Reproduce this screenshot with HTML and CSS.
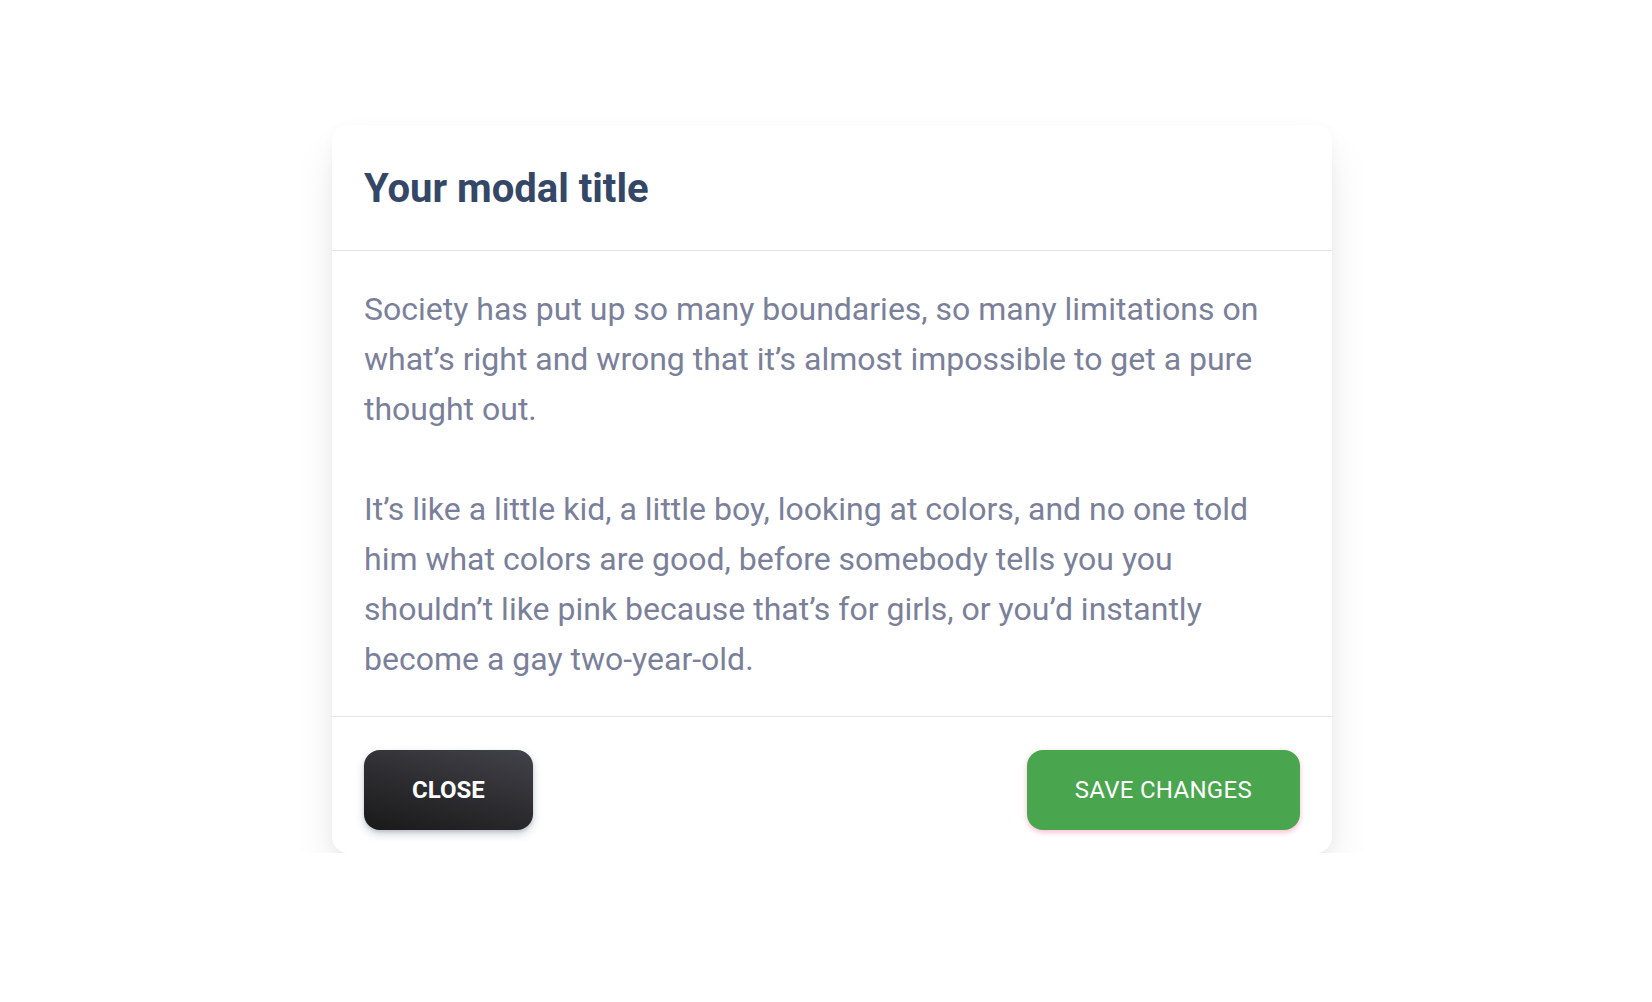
FILE: index.html
```html
<!DOCTYPE html>
<html lang="en">
<head>
<meta charset="utf-8">
<title>Modal</title>
<link rel="stylesheet" href="styles.css">
</head>
<body>
<div class="page">
  <div class="modal">
    <div class="modal-header">
      <h5 class="modal-title">Your modal title</h5>
    </div>
    <div class="modal-body">
      <p>Society has put up so many boundaries, so many limitations on what’s right and wrong that it’s almost impossible to get a pure thought out.</p>
      <p>It’s like a little kid, a little boy, looking at colors, and no one told him what colors are good, before somebody tells you you shouldn’t like pink because that’s for girls, or you’d instantly become a gay two-year-old.</p>
    </div>
    <div class="modal-footer">
      <button class="btn btn-dark">CLOSE</button>
      <button class="btn btn-success">SAVE CHANGES</button>
    </div>
  </div>
</div>
</body>
</html>
```

FILE: styles.css
```css
html, body {
  margin: 0;
  padding: 0;
  background: #ffffff;
  font-family: Roboto, "Liberation Sans", Arial, sans-serif;
}

.page {
  padding: 125px 0 0 332px;
}

.modal {
  width: 1000px;
  background: #ffffff;
  border-radius: 16px;
  box-shadow: 0 25px 45px -5px rgba(0, 0, 0, 0.1), 0 4px 14px rgba(0, 0, 0, 0.035);
}

.modal-header {
  height: 125px;
  padding: 0 32px;
  display: flex;
  align-items: center;
  border-bottom: 1px solid #e1e4e8;
}

.modal-title {
  margin: 2px 0 0;
  font-size: 40px;
  font-weight: 700;
  color: #344767;
  line-height: 1.2;
}

.modal-body {
  padding: 33px 32px 32px;
  border-bottom: 1px solid #e1e4e8;
}

.modal-body p {
  margin: 0 0 50px;
  font-size: 32px;
  line-height: 50px;
  color: #7b809a;
}

.modal-body p:last-child {
  margin-bottom: 0;
}

.modal-footer {
  padding: 33px 32px 23px;
  display: flex;
  justify-content: space-between;
  align-items: center;
}

.btn {
  height: 80px;
  padding: 0 48px;
  border: none;
  border-radius: 16px;
  font-family: Roboto, "Liberation Sans", Arial, sans-serif;
  font-size: 24px;
  color: #ffffff;
  cursor: pointer;
}

.btn-dark {
  font-weight: 700;
  padding: 0 48px;
  background-image: linear-gradient(195deg, #42424a 0%, #191919 100%);
  box-shadow: 0 4px 8px rgba(52, 71, 103, 0.25), 0 2px 3px rgba(52, 71, 103, 0.15);
}

.btn-success {
  font-weight: 400;
  letter-spacing: 0.3px;
  background: #4aa64e;
  box-shadow: 0 3px 5px rgba(233, 30, 99, 0.18), 0 1px 6px rgba(233, 30, 99, 0.12);
}
```
